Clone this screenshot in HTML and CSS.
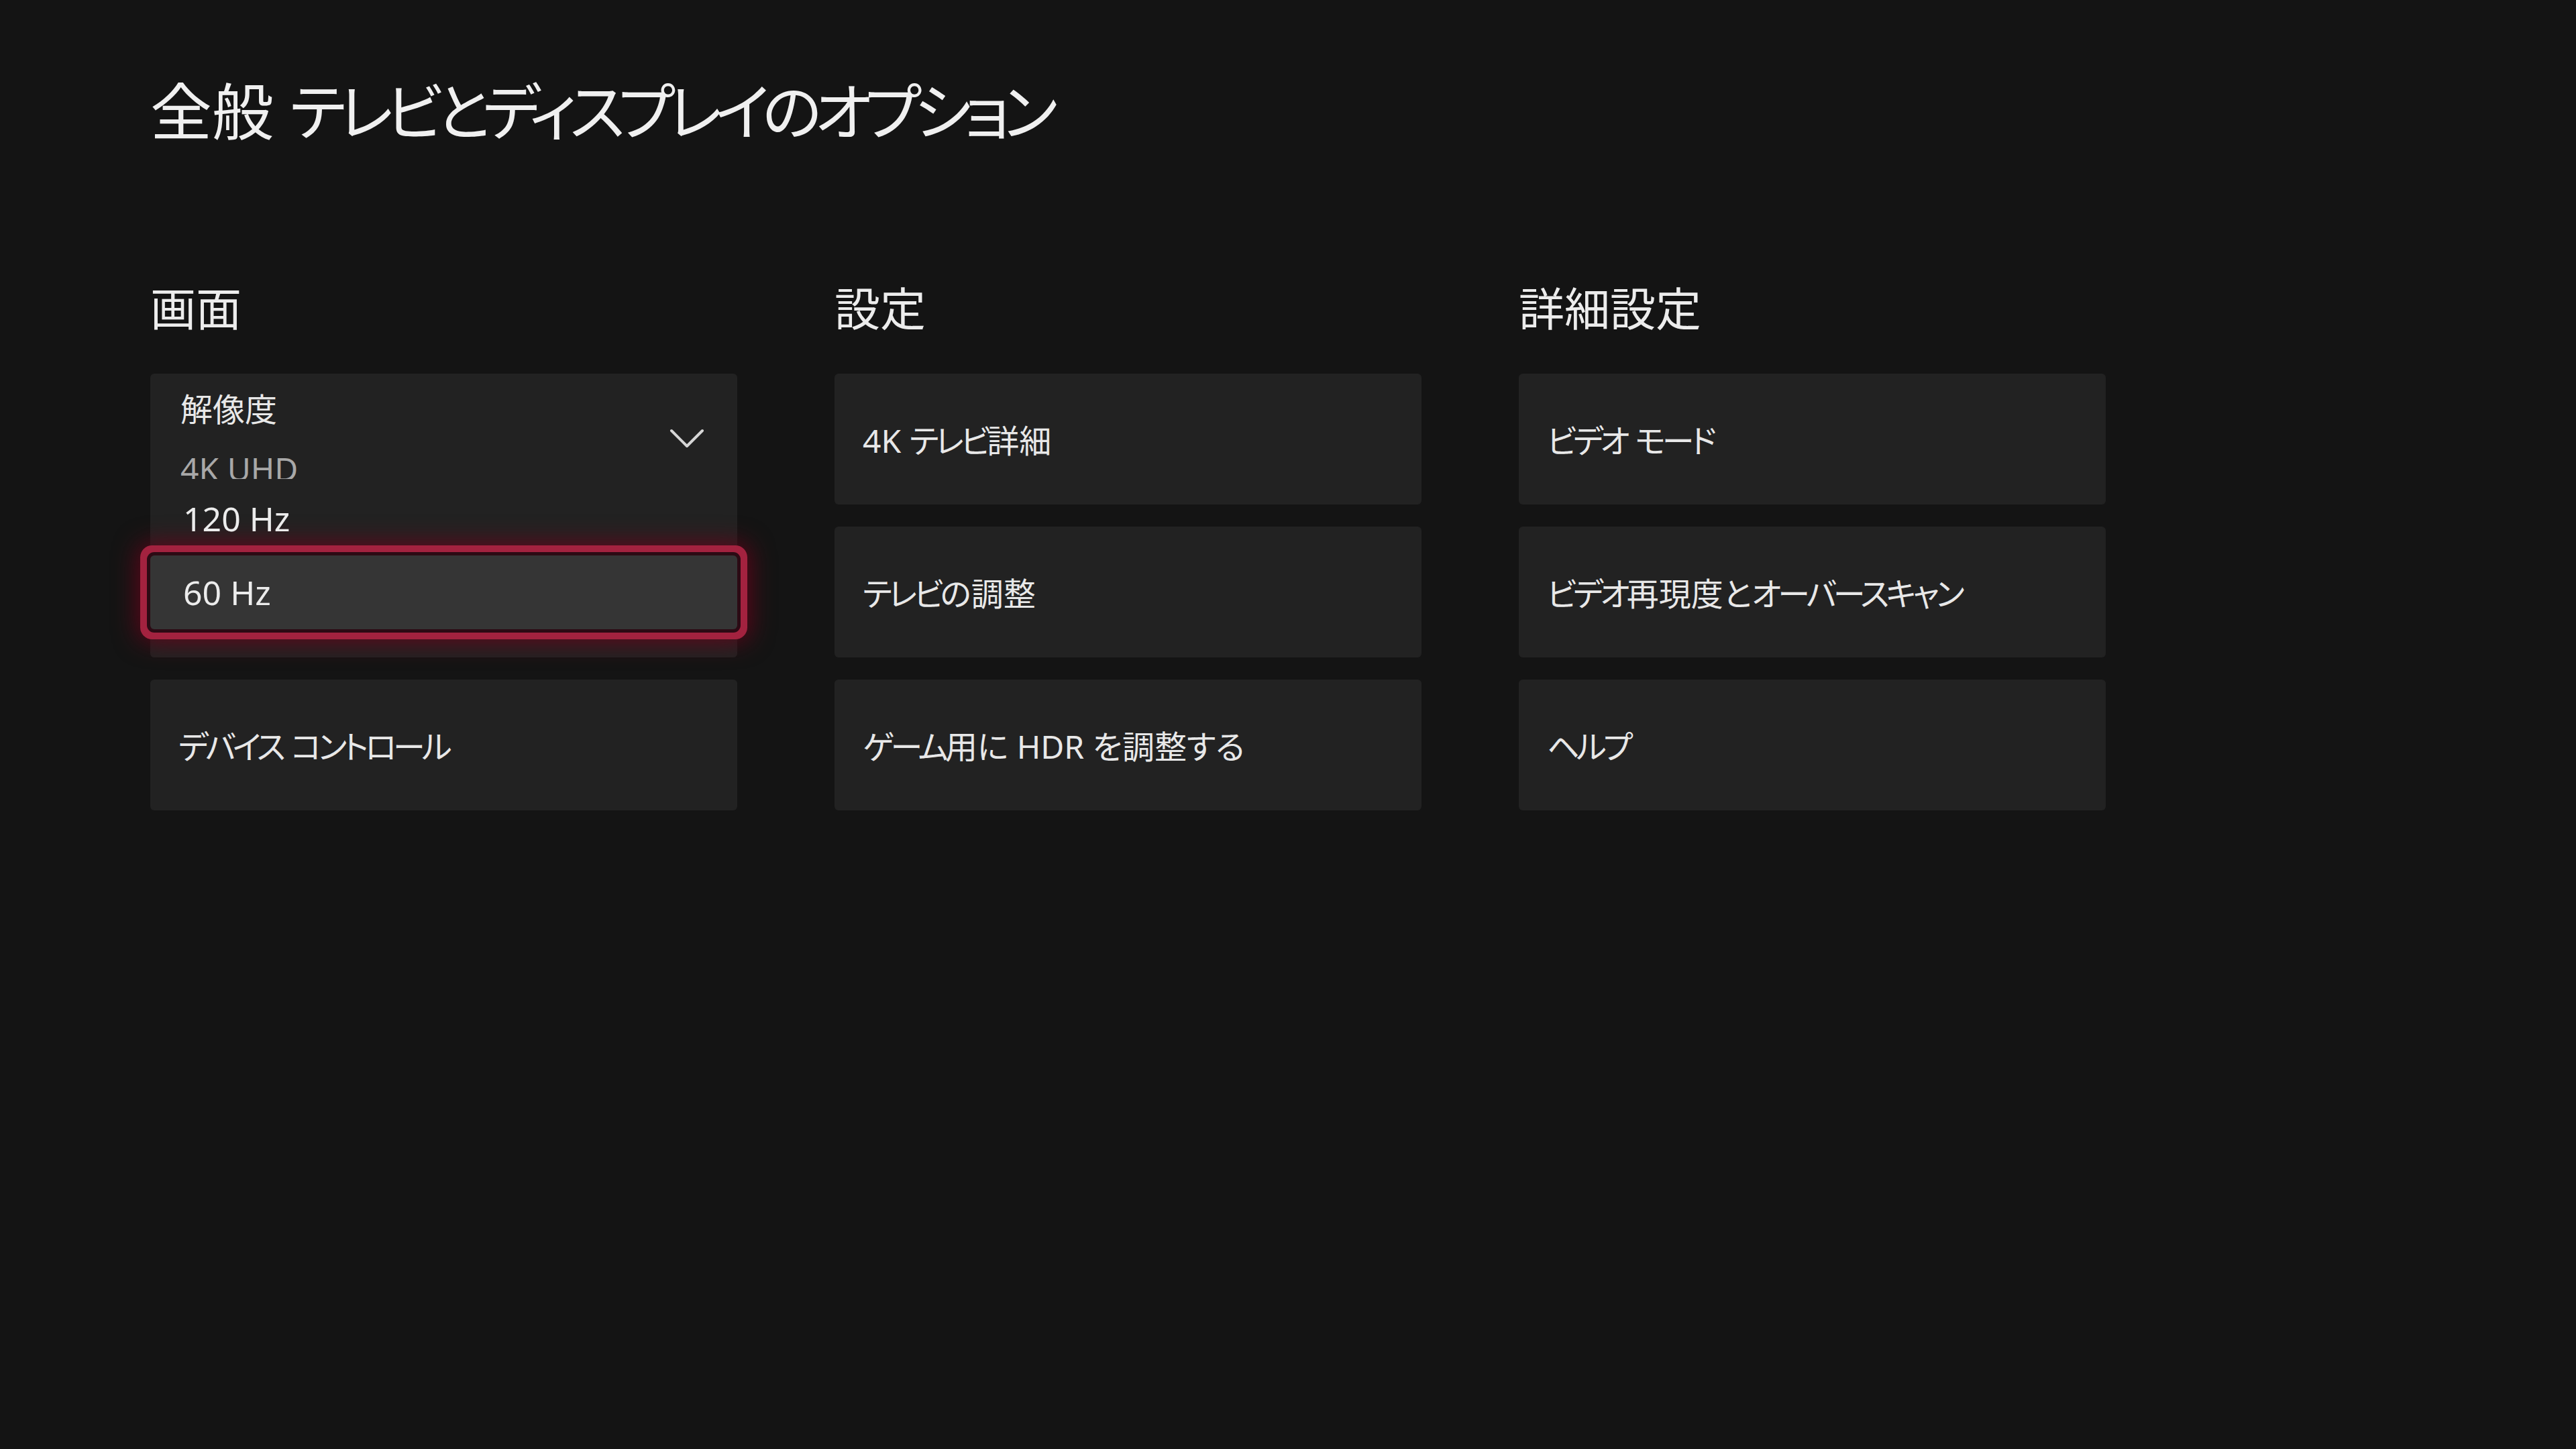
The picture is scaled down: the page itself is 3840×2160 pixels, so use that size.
FILE: index.html
```html
<!DOCTYPE html>
<html lang="ja">
<head>
    <meta charset="UTF-8">
    <meta name="viewport" content="width=device-width, initial-scale=1.0">
    <title>テレビとディスプレイのオプション</title>
    <link rel="stylesheet" href="styles.css">
</head>
<body>
    <div class="page">
        <h1 class="title">全般 <span class="kt">テレビとディスプレイのオプション</span></h1>

        <div class="columns">
            <div class="column">
                <h2 class="column-title">画面</h2>
                <div class="stack">
                    <div class="card dropdown">
                        <div class="dropdown-head">
                            <div class="dropdown-text">
                                <div class="dropdown-label">解像度</div>
                                <div class="dropdown-value">4K UHD</div>
                            </div>
                            <svg class="chevron" width="52" height="30" viewBox="0 0 52 30">
                                <polyline points="3,3 26,26 49,3" fill="none" stroke="#d6d6d6" stroke-width="4" stroke-linecap="round" stroke-linejoin="round"/>
                            </svg>
                        </div>
                        <div class="options">
                            <div class="option">120 Hz</div>
                            <div class="option selected">60 Hz</div>
                        </div>
                    </div>
                    <div class="card"><span class="label"><span class="kt">デバイス</span> <span class="kt">コントロール</span></span></div>
                </div>
            </div>

            <div class="column">
                <h2 class="column-title">設定</h2>
                <div class="stack">
                    <div class="card"><span class="label">4K <span class="kt">テレビ</span>詳細</span></div>
                    <div class="card"><span class="label"><span class="kt">テレビ</span>の調整</span></div>
                    <div class="card"><span class="label"><span class="kt">ゲーム</span>用に HDR を調整する</span></div>
                </div>
            </div>

            <div class="column">
                <h2 class="column-title">詳細設定</h2>
                <div class="stack">
                    <div class="card"><span class="label"><span class="kt">ビデオ</span> <span class="kt">モード</span></span></div>
                    <div class="card"><span class="label"><span class="kt">ビデオ</span>再現度と<span class="kt">オーバースキャン</span></span></div>
                    <div class="card"><span class="label"><span class="kt">ヘルプ</span></span></div>
                </div>
            </div>
        </div>
    </div>
</body>
</html>
```

FILE: styles.css
```css
html, body {
    margin: 0;
    height: 100%;
}
body {
    background: #141414;
    color: #e8e8e8;
    font-family: "Noto Sans", "Noto Sans CJK JP", sans-serif;
    font-feature-settings: "palt";
}
/* katakana in the console font is narrower than in Noto */
.kt {
    letter-spacing: -0.1em;
}
.page {
    padding: 111px 0 0 224px;
}
.title {
    margin: 0 0 198px 0;
    font-size: 92px;
    line-height: 1.2;
    font-weight: 400;
    color: #f0f0f0;
}
.title .kt {
    letter-spacing: -0.115em;
}
.columns {
    display: flex;
    gap: 145px;
}
.column {
    width: 875px;
}
.column-title {
    margin: 0 0 56px 0;
    font-size: 68px;
    line-height: 1.2;
    font-weight: 400;
    color: #ececec;
}
.stack {
    display: flex;
    flex-direction: column;
    gap: 33px;
}
.card {
    height: 195px;
    box-sizing: border-box;
    padding: 0 42px;
    background: #222222;
    border-radius: 6px;
    display: flex;
    align-items: center;
    font-size: 48px;
}
.dropdown {
    height: 423px;
    padding: 0;
    display: block;
    position: relative;
}
.dropdown-head {
    height: 195px;
    box-sizing: border-box;
    padding: 0 49px 0 45px;
    display: flex;
    align-items: center;
    justify-content: space-between;
}
.dropdown-label {
    font-size: 48px;
    line-height: 58px;
}
.dropdown-value {
    margin-top: 31px;
    font-size: 48px;
    line-height: 58px;
    color: #a8a8a8;
}
.options {
    position: absolute;
    top: 157px;
    left: 0;
    right: 0;
    bottom: 0;
    padding-top: 4px;
    background: #222222;
    border-radius: 0 0 6px 6px;
}
.option {
    height: 110px;
    box-sizing: border-box;
    padding-left: 49px;
    display: flex;
    align-items: center;
    font-size: 50px;
    color: #ececec;
}
.option.selected {
    background: #353535;
    border-radius: 6px;
    box-shadow:
        0 0 0 5px #2c0a14,
        0 0 0 15px #a3223f,
        0 0 36px 18px rgba(110, 0, 26, 0.85);
}
```
